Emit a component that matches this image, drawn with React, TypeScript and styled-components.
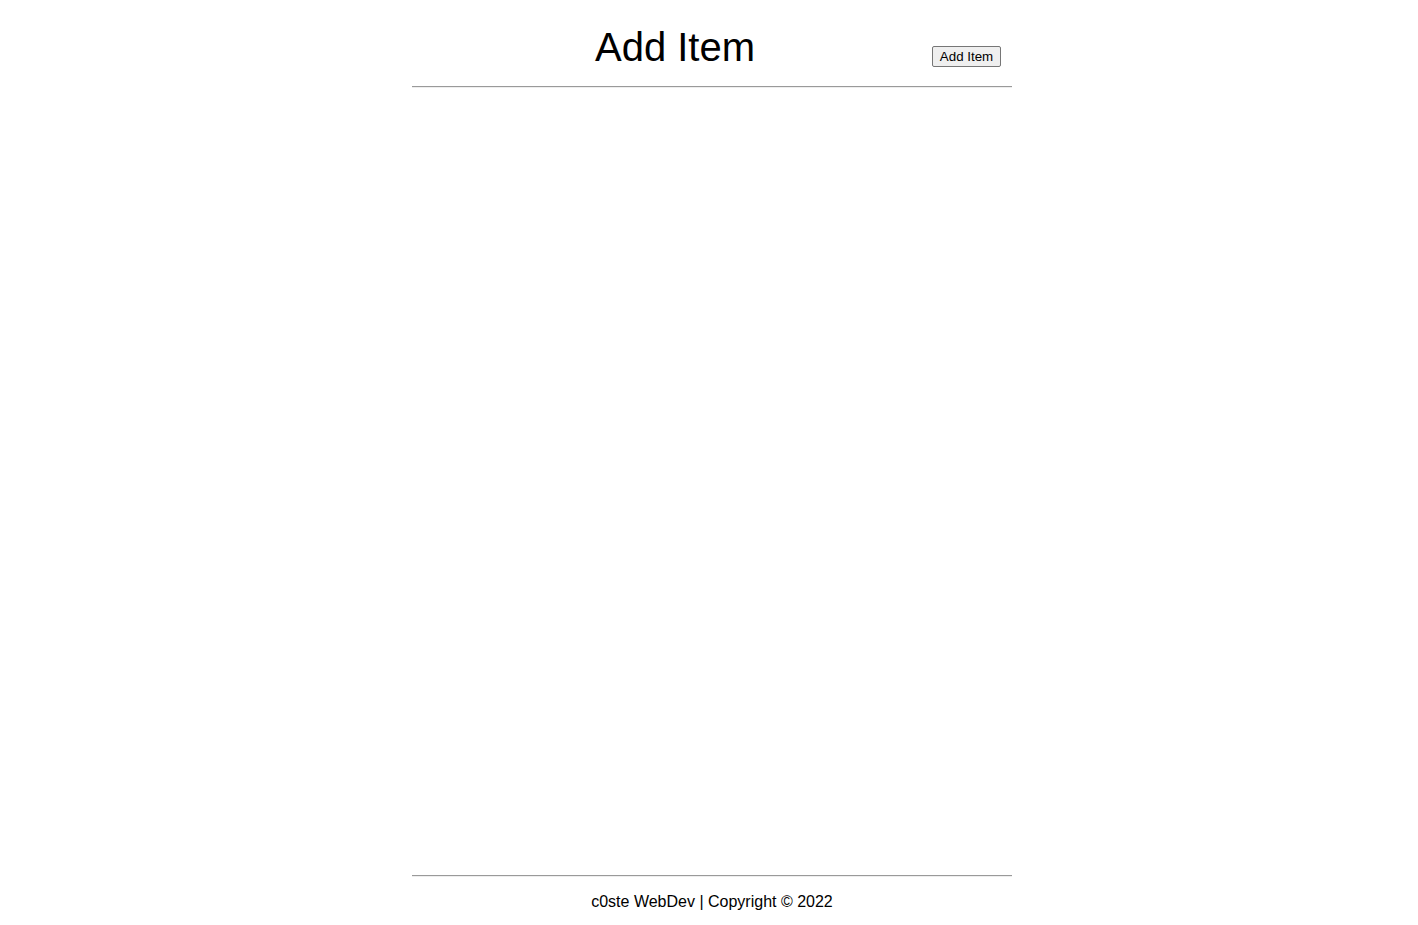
import React from "react";
import styled, { createGlobalStyle } from "styled-components";

const Global = createGlobalStyle`
  html, body { margin: 0; padding: 0; background: #fff; }
  body { font-family: "Liberation Sans", Arial, sans-serif; color: #000; }
`;

const Page = styled.div`
  width: 600px;
  height: 925px;
  margin-left: 412px;
  display: flex;
  flex-direction: column;
`;

const Header = styled.header`
  display: flex;
  align-items: flex-start;
  padding: 24px 11px 0 6px;
  height: 86px;
  box-sizing: border-box;
`;

const Title = styled.h1`
  flex: 1;
  margin: 0;
  text-align: center;
  font-size: 40px;
  font-weight: 400;
  line-height: 46px;
`;

const Button = styled.button`
  font-family: "Liberation Sans", Arial, sans-serif;
  font-size: 13.33px;
  height: 21px;
  width: 69px;
  padding: 1px 6px 0;
  margin-top: 22px;
  background: #efefef;
  border: 1px solid #767676;
  border-radius: 2px;
  color: #000;
  box-sizing: border-box;
  line-height: 16px;
`;

const Rule = styled.hr`
  margin: 0;
  border: none;
  border-top: 1px solid #9a9a9a;
  border-bottom: 1px solid #eeeeee;
  height: 0;
`;

const Main = styled.main`
  flex: 1;
`;

const Footer = styled.footer`
  text-align: center;
  font-size: 16px;
  line-height: 18px;
  padding: 16px 0 14px;
`;

export default function App() {
  return (
    <>
      <Global />
      <Page>
        <Header>
          <Title>Add Item</Title>
          <Button>Add Item</Button>
        </Header>
        <Rule />
        <Main />
        <Rule />
        <Footer>c0ste WebDev | Copyright © 2022</Footer>
      </Page>
    </>
  );
}
